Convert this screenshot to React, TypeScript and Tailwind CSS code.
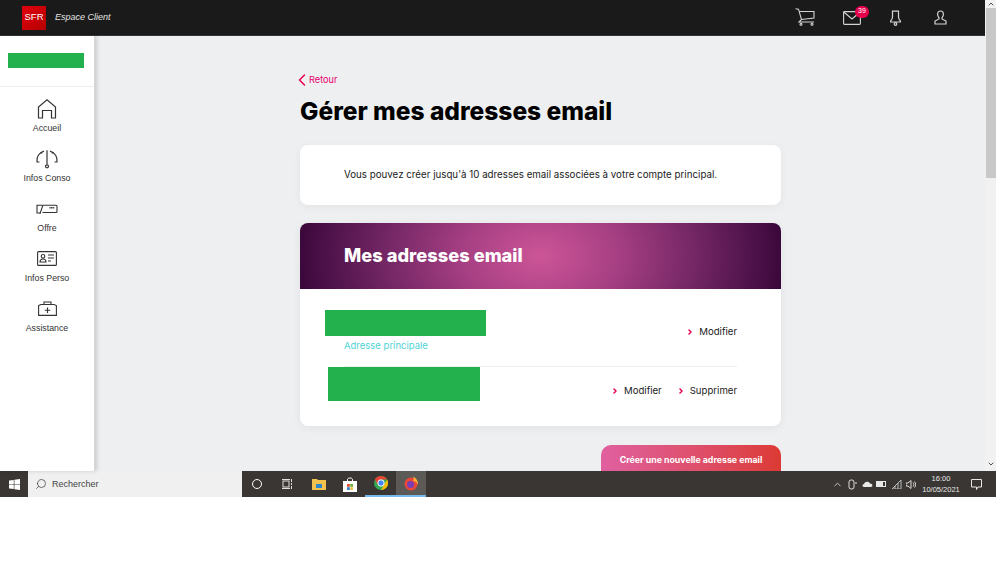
import React from "react";
import { ChevronLeft, ChevronRight, ChevronUp, ChevronDown, Search } from "lucide-react";

const inter = "font-['Inter','Liberation_Sans',sans-serif]";

const Cart = () => (
  <svg width="20" height="18" viewBox="0 0 20 18" fill="none" stroke="#d4d4d4" strokeWidth="1.1">
    <path d="M0.5 0.8 L3.5 1.2 L6.5 11.5 L4 14 H19" />
    <path d="M4.5 3.5 H19 V10 L6.5 11.5" />
    <circle cx="6" cy="16.3" r="1" />
    <circle cx="17" cy="16.3" r="1" />
  </svg>
);
const Mail = () => (
  <svg width="18" height="14" viewBox="0 0 18 14" fill="none" stroke="#d4d4d4" strokeWidth="1.1">
    <rect x="0.6" y="0.6" width="16.8" height="12.8" rx="0.8" />
    <path d="M0.8 1 L9 8 L17.2 1" />
  </svg>
);
const Bell = () => (
  <svg width="11" height="16" viewBox="0 0 11 16" fill="none" stroke="#d4d4d4" strokeWidth="1.2">
    <path d="M2.5 1.2 H8.5 V7 C8.5 9 9.5 10 10.4 11 V12 H0.6 V11 C1.5 10 2.5 9 2.5 7 Z" />
    <circle cx="5.5" cy="14" r="1.3" />
  </svg>
);
const User = () => (
  <svg width="13" height="15" viewBox="0 0 13 15" fill="none" stroke="#d4d4d4" strokeWidth="1.2">
    <path d="M6.5 1 C8.4 1 9.4 2.4 9.4 4.2 C9.4 6 8.5 7 8 7.8 V9 L12 11 V14 H1 V11 L5 9 V7.8 C4.5 7 3.6 6 3.6 4.2 C3.6 2.4 4.6 1 6.5 1 Z" />
  </svg>
);

const HomeI = () => (
  <svg width="20" height="20" viewBox="0 0 20 20" fill="none" stroke="#333" strokeWidth="1.2">
    <path d="M1.5 19 H5.5 V11.5 H14.5 V19 H18.5 V8 L10 0.8 L1.5 8 Z" />
  </svg>
);
const Gauge = () => (
  <svg width="24" height="20" viewBox="0 0 24 20" fill="none" stroke="#333" strokeWidth="1.2">
    <path d="M4.5 13 H2 C1.2 8 4 3.6 9 2.2" />
    <path d="M19.5 13 H22 C22.8 8 20 3.6 15 2.2" />
    <path d="M7 4.5 L5.8 3 M17 4.5 L18.2 3 M12 1 H12.01" />
    <path d="M12 1.2 V15.5" />
    <circle cx="12" cy="17.3" r="1.5" />
  </svg>
);
const Offer = () => (
  <svg width="22" height="10" viewBox="0 0 22 10" fill="none" stroke="#333" strokeWidth="1.1">
    <path d="M4.5 9 H1 V1.2 H20 Q21 1.2 21 2.2 V7.5 Q21 8.5 20 8.5 H6.5" />
    <path d="M4 9.6 L6.8 1.5" />
    <path d="M13.5 3.8 H18.5" strokeWidth="1.6" strokeDasharray="1.2 0.4" />
  </svg>
);
const Card = () => (
  <svg width="20" height="15" viewBox="0 0 20 15" fill="none" stroke="#333" strokeWidth="1.1">
    <rect x="0.6" y="0.6" width="18.8" height="13.8" rx="1" />
    <circle cx="6" cy="5.3" r="1.8" />
    <path d="M3 11 C3 9 4.5 8 6 8 C7.5 8 9 9 9 11 Z" />
    <path d="M11 4 H17 M11 7 H17 M11 10 H14" />
  </svg>
);
const Kit = () => (
  <svg width="19" height="15" viewBox="0 0 19 15" fill="none" stroke="#333" strokeWidth="1.1">
    <path d="M0.6 4.5 L3 3.5 H16 L18.4 4.5 V14.4 H0.6 Z" />
    <path d="M6 3.5 V1 H13 V3.5" />
    <path d="M9.5 6.5 V12 M6.8 9.2 H12.2" />
  </svg>
);

const nav = [
  { label: "Accueil", icon: <HomeI /> },
  { label: "Infos Conso", icon: <Gauge /> },
  { label: "Offre", icon: <Offer /> },
  { label: "Infos Perso", icon: <Card /> },
  { label: "Assistance", icon: <Kit /> },
];

const Action = ({ label }: { label: string }) => (
  <span className="flex items-center gap-[5px] text-[9.6px] text-[#1a1a1a]">
    <ChevronRight size={8} strokeWidth={4.5} className="text-[#e6004c]" />
    {label}
  </span>
);

const WinLogo = () => (
  <svg width="11" height="11" viewBox="0 0 11 11" fill="#fff">
    <path d="M0 1.6 L4.8 0.9 V5.2 H0 Z M5.4 0.8 L11 0 V5.2 H5.4 Z M0 5.8 H4.8 V10.1 L0 9.4 Z M5.4 5.8 H11 V11 L5.4 10.2 Z" />
  </svg>
);

export default function App() {
  return (
    <div className="w-[999px] h-[562px] bg-white overflow-hidden flex flex-col font-['Liberation_Sans',sans-serif]">
      <div className="h-[471px] w-[996px] flex">
        <div className="w-[985px] flex flex-col">
          <header className="h-[36px] shrink-0 bg-[#1a1a1a] flex items-center border-b border-[#333] pr-[38px]">
            <div className="ml-[22px] w-[24px] h-[24px] bg-gradient-to-br from-[#e2000f] to-[#b30000] flex items-center justify-center text-white text-[9.5px] font-normal">
              SFR
            </div>
            <span className="ml-[9px] text-[9px] italic text-[#e5e5e5]">Espace Client</span>
            <div className="ml-auto flex items-center">
              <div className="relative mt-[-2px]"><Cart /></div>
              <div className="relative ml-[28px]">
                <Mail />
                <span className="absolute -top-[5px] left-[12px] w-[14px] h-[12px] rounded-full bg-[#e6004c] text-white text-[7px] flex items-center justify-center">39</span>
              </div>
              <div className="ml-[29px]"><Bell /></div>
              <div className="ml-[33px]"><User /></div>
            </div>
          </header>
          <div className="flex-1 min-h-0 flex">
            <aside className="w-[95px] shrink-0 bg-white border-r border-[#d8d8d8] shadow-[2px_0_4px_rgba(0,0,0,0.15)] z-10">
              <div className="h-[51px] border-b border-[#eeeeee] flex items-center pl-[8px]">
                <div className="w-[76px] h-[15px] bg-[#23b14d] -mt-[1px]" />
              </div>
              <nav className="flex flex-col items-center pt-[11px]">
                {nav.map((n) => (
                  <div key={n.label} className="h-[50px] w-full flex flex-col items-center">
                    <div className="h-[21px] flex items-center justify-center">{n.icon}</div>
                    <span className="mt-[4px] text-[8.8px] leading-[11px] text-[#333]">{n.label}</span>
                  </div>
                ))}
              </nav>
            </aside>
            <main className={`flex-1 min-w-0 bg-[#eeeff1] overflow-hidden pl-[205px] pt-[37px] ${inter}`}>
              <div className="w-[481px]">
                <div className="flex items-center h-[14px] text-[9.2px] leading-[14px] text-[#e6006e] -ml-[8px]">
                  <ChevronLeft size={20} strokeWidth={1.8} className="text-[#e6004c]" />
                  <span className="-ml-[3px]">Retour</span>
                </div>
                <h1 className="mt-[8px] text-[24.5px] leading-[32px] font-extrabold text-black whitespace-nowrap">Gérer mes adresses email</h1>
                <div className="mt-[18px] h-[60px] bg-white rounded-[8px] shadow-[0_2px_8px_rgba(0,0,0,0.05)] flex items-center pl-[44px] text-[9.75px] text-[#1a1a1a] whitespace-nowrap">
                  Vous pouvez créer jusqu'à 10 adresses email associées à votre compte principal.
                </div>
                <section className="mt-[18px] h-[203px] bg-white rounded-[8px] shadow-[0_2px_8px_rgba(0,0,0,0.06)] overflow-hidden">
                  <div className="h-[66px] flex items-center pl-[44px] bg-[radial-gradient(ellipse_250px_170px_at_center,#cc5597_0%,#a84084_30%,#6f2462_65%,#360538_100%)] text-white text-[18.3px] font-extrabold">
                    Mes adresses email
                  </div>
                  <div className="pl-[44px] pr-[44px]">
                    <div className="relative h-[78px] border-b border-[#eeeeee] flex items-center justify-end pt-[10px]">
                      <div className="absolute left-[-19px] top-[21px] w-[161px] h-[26px] bg-[#23b14d]" />
                      <span className="absolute left-0 top-[50px] text-[9.5px] leading-[14px] text-[#4fd3d6]">Adresse principale</span>
                      <Action label="Modifier" />
                    </div>
                    <div className="relative h-[59px] flex items-center justify-end gap-[15px] pb-[10px]">
                      <div className="absolute left-[-16px] top-0 w-[152px] h-[34px] bg-[#23b14d]" />
                      <Action label="Modifier" />
                      <Action label="Supprimer" />
                    </div>
                  </div>
                </section>
                <div className="mt-[19px] ml-[301px] w-[180px] h-[40px] rounded-t-[10px] bg-gradient-to-r from-[#e0609f] to-[#dc3a33] flex justify-center pt-[9px] text-white text-[8.8px] leading-[12px] font-bold whitespace-nowrap">
                  Créer une nouvelle adresse email
                </div>
              </div>
            </main>
          </div>
        </div>
        <div className="w-[11px] shrink-0 bg-[#f1f1f1] flex flex-col justify-between">
          <div className="flex flex-col">
            <div className="h-[8px] flex items-center justify-center"><ChevronUp size={8} strokeWidth={3} className="text-[#505050]" /></div>
            <div className="h-[170px] bg-[#c8c8c8] ml-[1px]" />
          </div>
          <div className="h-[14px] flex items-center justify-center"><ChevronDown size={8} strokeWidth={3} className="text-[#505050]" /></div>
        </div>
      </div>

      <footer className="h-[26px] w-[996px] shrink-0 bg-[#3a3633] flex items-center text-white">
        <div className="w-[28px] flex items-center justify-center"><WinLogo /></div>
        <div className="w-[214px] h-full bg-[#f0f0f0] flex items-center pl-[7px] text-[#444] text-[9px]">
          <Search size={12} strokeWidth={1.5} className="-scale-x-100" />
          <span className="ml-[5px] pt-[1px]">Rechercher</span>
        </div>
        <div className="w-[30px] flex justify-center">
          <span className="w-[10px] h-[10px] rounded-full border-[1.5px] border-white" />
        </div>
        <div className="w-[30px] flex justify-center">
          <svg width="11" height="10" viewBox="0 0 11 10" fill="none" stroke="#e0e0e0"><rect x="1" y="2" width="6" height="6" /><path d="M0 .5 H8 M0 9.5 H8 M9.5 0 V3 M9.5 4 V6 M9.5 7 V10" /></svg>
        </div>
        <div className="w-[33px] flex justify-center">
          <svg width="14" height="12" viewBox="0 0 14 12"><path d="M0 1 H5 L6 2 H14 V12 H0 Z" fill="#f2c14e" /><rect x="4" y="6" width="6" height="4" fill="#2c86c9" /></svg>
        </div>
        <div className="w-[30px] flex justify-center">
          <svg width="14" height="15" viewBox="0 0 14 15" fill="none"><path d="M4.5 4 V2.5 C4.5 .5 9.5 .5 9.5 2.5 V4" stroke="#fff" /><rect x="0" y="4" width="14" height="11" fill="#fff" /><rect x="4" y="7" width="2.8" height="2.8" fill="#e74c2e" /><rect x="7.2" y="7" width="2.8" height="2.8" fill="#6cb33f" /><rect x="4" y="10.2" width="2.8" height="2.8" fill="#2c86c9" /><rect x="7.2" y="10.2" width="2.8" height="2.8" fill="#f2c14e" /></svg>
        </div>
        <div className="w-[31px] h-full flex items-center justify-center border-b-2 border-[#76b9ed]">
          <svg width="14" height="14" viewBox="0 0 14 14"><circle cx="7" cy="7" r="7" fill="#34a853" /><path d="M7 0 A7 7 0 0 1 13.1 3.5 L7 3.5 L3.9 8.7 L.9 3.5 A7 7 0 0 1 7 0" fill="#ea4335" /><path d="M13.1 3.5 A7 7 0 0 1 7 14 L10 8.7 Z" fill="#fbbc05" /><circle cx="7" cy="7" r="3.2" fill="#4285f4" stroke="#fff" /></svg>
        </div>
        <div className="w-[30px] h-full bg-[#5c5a57] flex items-center justify-center border-b-2 border-[#76b9ed]">
          <svg width="15" height="15" viewBox="0 0 15 15"><circle cx="7" cy="8" r="6.5" fill="#e8473a" /><path d="M9 0.5 C13 2.5 14.5 6 14 9 C13 6 11 5 9 5 C10 3.5 10 2 9 0.5" fill="#ffb02e" /><circle cx="6.5" cy="8.5" r="3.5" fill="#7a3fb5" /></svg>
        </div>
        <div className="ml-auto flex items-center h-full pr-[14px]">
          <ChevronUp size={11} strokeWidth={1.5} className="text-white" />
          <svg className="ml-[5px]" width="9" height="11" viewBox="0 0 9 11" fill="none" stroke="#ddd"><rect x="1" y="1" width="5" height="9" rx="2" /><path d="M7 4 H9" /></svg>
          <svg className="ml-[5px]" width="11" height="6" viewBox="0 0 11 6" fill="#e8e8e8"><path d="M2 6 C0 6 0 3 2 3 C3 0 7 0 8 2.5 C11 2.5 11 6 9 6 Z" /></svg>
          <svg className="ml-[3px]" width="11" height="6" viewBox="0 0 11 6" fill="none" stroke="#e8e8e8"><rect x=".5" y=".5" width="9" height="5" /><rect x="1.5" y="1.5" width="5" height="3" fill="#e8e8e8" /></svg>
          <svg className="ml-[5px]" width="10" height="9" viewBox="0 0 10 9" fill="none" stroke="#bbb"><path d="M0 9 L9 0 V9 Z M3 9 V6 M6 9 V3" /></svg>
          <svg className="ml-[4px]" width="10" height="9" viewBox="0 0 10 9" fill="none" stroke="#ddd"><path d="M0 3 H2 L5 .5 V8.5 L2 6 H0 Z M7 2.5 C8 3.5 8 5.5 7 6.5 M8.5 1.5 C10 3 10 6 8.5 7.5" /></svg>
          <div className="ml-[6px] w-[38px] flex flex-col items-center text-[7.5px] leading-[11px] text-[#e8e8e8]">
            <span>16:00</span>
            <span>10/05/2021</span>
          </div>
          <svg className="ml-[11px]" width="11" height="11" viewBox="0 0 11 11" fill="none" stroke="#e8e8e8"><path d="M.5 .5 H10.5 V8 H7 L5.5 10.5 V8 H.5 Z" /></svg>
        </div>
      </footer>
      <div className="flex-1 bg-white" />
    </div>
  );
}
